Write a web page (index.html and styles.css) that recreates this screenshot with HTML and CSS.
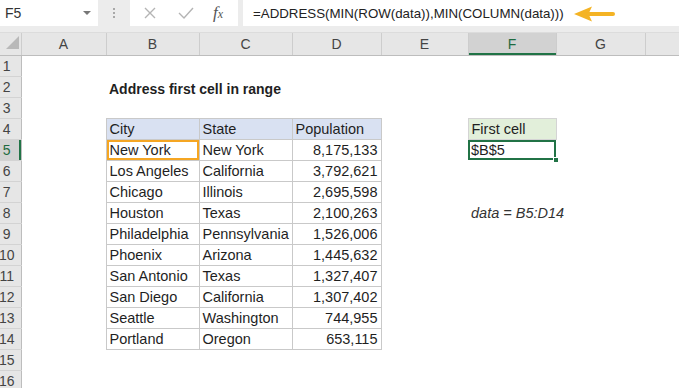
FILE: index.html
```html
<!DOCTYPE html>
<html lang="en">
<head>
  <meta charset="UTF-8">
  <title>ADDRESS first cell in range</title>
  <link rel="stylesheet" href="styles.css">
</head>
<body>

<div class="fbar">
  <div class="namebox"><span>F5</span><span class="caret"></span></div>
  <div class="grip"><i></i><i></i><i></i></div>
  <div class="fnbox">
    <svg class="ico" width="14" height="14" viewBox="0 0 14 14"><path d="M2 2 L12 12 M12 2 L2 12" stroke="#b4b4b4" stroke-width="1.4" fill="none"/></svg>
    <svg class="ico" width="16" height="14" viewBox="0 0 16 14"><path d="M1 7 L6 12 L15 2" stroke="#b4b4b4" stroke-width="1.4" fill="none"/></svg>
    <span class="fx">f<small>x</small></span>
  </div>
  <div class="formula">
    <span>=ADDRESS(MIN(ROW(data)),MIN(COLUMN(data)))</span>
    <svg class="arrow" width="42" height="16" viewBox="0 0 42 16">
      <path d="M0 8 L18 0.5 L14.5 8 L18 15.5 Z" fill="#f4b324"/>
      <rect x="12" y="6" width="29" height="4" rx="2" fill="#f4b324"/>
    </svg>
  </div>
</div>

<table class="sheet">
  <colgroup>
    <col class="w-rh"><col class="w-a"><col class="w-b"><col class="w-c"><col class="w-d">
    <col class="w-e"><col class="w-f"><col class="w-g"><col class="w-h">
  </colgroup>
  <tr class="head">
    <th class="corner"><span></span></th><th>A</th><th>B</th><th>C</th><th>D</th><th>E</th><th class="on">F</th><th>G</th><th></th>
  </tr>
  <tr><th class="rh">1</th><td></td><td></td><td></td><td></td><td></td><td></td><td></td><td></td></tr>
  <tr><th class="rh">2</th><td></td><td class="title">Address first cell in range</td><td></td><td></td><td></td><td></td><td></td><td></td></tr>
  <tr><th class="rh">3</th><td></td><td></td><td></td><td></td><td></td><td></td><td></td><td></td></tr>
  <tr><th class="rh">4</th><td></td><td class="t hd">City</td><td class="t hd">State</td><td class="t hd">Population</td><td></td><td class="lbl">First cell</td><td></td><td></td></tr>
  <tr><th class="rh on">5</th><td></td><td class="t pick">New York</td><td class="t">New York</td><td class="t num">8,175,133</td><td></td><td class="sel">$B$5<span class="handle"></span></td><td></td><td></td></tr>
  <tr><th class="rh">6</th><td></td><td class="t">Los Angeles</td><td class="t">California</td><td class="t num">3,792,621</td><td></td><td></td><td></td><td></td></tr>
  <tr><th class="rh">7</th><td></td><td class="t">Chicago</td><td class="t">Illinois</td><td class="t num">2,695,598</td><td></td><td></td><td></td><td></td></tr>
  <tr><th class="rh">8</th><td></td><td class="t">Houston</td><td class="t">Texas</td><td class="t num">2,100,263</td><td></td><td class="note">data = B5:D14</td><td></td><td></td></tr>
  <tr><th class="rh">9</th><td></td><td class="t">Philadelphia</td><td class="t">Pennsylvania</td><td class="t num">1,526,006</td><td></td><td></td><td></td><td></td></tr>
  <tr><th class="rh">10</th><td></td><td class="t">Phoenix</td><td class="t">Arizona</td><td class="t num">1,445,632</td><td></td><td></td><td></td><td></td></tr>
  <tr><th class="rh">11</th><td></td><td class="t">San Antonio</td><td class="t">Texas</td><td class="t num">1,327,407</td><td></td><td></td><td></td><td></td></tr>
  <tr><th class="rh">12</th><td></td><td class="t">San Diego</td><td class="t">California</td><td class="t num">1,307,402</td><td></td><td></td><td></td><td></td></tr>
  <tr><th class="rh">13</th><td></td><td class="t">Seattle</td><td class="t">Washington</td><td class="t num">744,955</td><td></td><td></td><td></td><td></td></tr>
  <tr><th class="rh">14</th><td></td><td class="t">Portland</td><td class="t">Oregon</td><td class="t num">653,115</td><td></td><td></td><td></td><td></td></tr>
  <tr><th class="rh">15</th><td></td><td></td><td></td><td></td><td></td><td></td><td></td><td></td></tr>
  <tr><th class="rh">16</th><td></td><td></td><td></td><td></td><td></td><td></td><td></td><td></td></tr>
</table>

</body>
</html>
```

FILE: styles.css
```css
* { box-sizing: border-box; margin: 0; padding: 0; }
body {
  width: 679px;
  height: 388px;
  overflow: hidden;
  background: #fff;
  font-family: "Liberation Sans", Arial, sans-serif;
  color: #222;
}

/* formula bar */
.fbar {
  display: flex;
  height: 33px;
  padding-bottom: 6px;
  background: #ececec;
  border-bottom: 1px solid #dcdcdc;
}
.namebox {
  width: 98px;
  background: #fff;
  display: flex;
  align-items: center;
  justify-content: space-between;
  padding: 0 7px 0 5px;
  font-size: 14px;
  color: #333;
}
.caret {
  border-left: 4px solid transparent;
  border-right: 4px solid transparent;
  border-top: 4px solid #777;
}
.grip {
  width: 32px;
  display: flex;
  flex-direction: column;
  align-items: center;
  justify-content: center;
  gap: 2px;
}
.grip i { width: 2px; height: 2px; background: #a8a8a8; }
.fnbox {
  width: 108px;
  background: #fff;
  display: flex;
  align-items: center;
  padding-left: 13px;
  gap: 21px;
}
.fx {
  font-family: "Liberation Serif", serif;
  font-style: italic;
  font-size: 17px;
  color: #555;
  margin-left: -2px;
}
.fx small { font-size: 12px; }
.formula {
  flex: 1;
  margin-left: 5px;
  background: #fff;
  display: flex;
  align-items: center;
  padding-left: 10px;
  font-size: 13.3px;
  color: #222;
}
.arrow { margin-left: 10px; margin-top: 2px; }

/* sheet */
.sheet {
  border-collapse: collapse;
  table-layout: fixed;
  width: 712px;
  margin-left: -7px;
}
.w-rh { width: 28px; }
.w-a { width: 85px; }
.w-b { width: 93px; }
.w-c { width: 93px; }
.w-d { width: 89px; }
.w-e { width: 87px; }
.w-f { width: 88px; }
.w-g { width: 89px; }
.w-h { width: 60px; }

tr { height: 21px; }
.head { height: 22px; }
.head th {
  background: #e6e6e6;
  border-right: 1px solid #cdcdcd;
  border-bottom: 1px solid #bdbdbd;
  font-weight: normal;
  font-size: 14px;
  color: #444;
}
.head th.on {
  background: #d2d2d2;
  color: #1e6b40;
  box-shadow: inset 0 -2px 0 #217346;
}
.corner {
  text-align: right;
  vertical-align: bottom;
  padding: 0 2px 3px 0;
}
.corner span {
  display: inline-block;
  border-left: 13px solid transparent;
  border-bottom: 13px solid #b9b9b9;
}
.rh {
  background: #e6e6e6;
  border-right: 1px solid #bdbdbd;
  border-bottom: 1px solid #d3d3d3;
  font-weight: normal;
  font-size: 14px;
  color: #444;
  text-align: center;
}
.rh.on {
  background: #d2d2d2;
  color: #1e6b40;
  box-shadow: inset -2px 0 0 #217346;
}

td {
  padding: 0 3px;
  vertical-align: bottom;
  font-size: 14.5px;
  line-height: 19px;
  white-space: nowrap;
  color: #1f1f1f;
}
.t { border: 1px solid #c9c9c9; }
.hd { background: #d9e1f2; }
.num { text-align: right; }
.title {
  font-weight: bold;
  font-size: 14px;
  line-height: 15px;
}
.lbl {
  background: #e2efda;
  border: 1px solid #d4d4d4;
}
.pick { box-shadow: inset 0 0 0 2px #f5a623; }
.sel {
  position: relative;
  box-shadow: inset 0 0 0 2px #217346;
}
.handle {
  position: absolute;
  right: -3px;
  bottom: -3px;
  width: 6px;
  height: 6px;
  background: #217346;
  border: 1px solid #fff;
}
.note {
  font-style: italic;
  color: #333;
  overflow: visible;
}
```
